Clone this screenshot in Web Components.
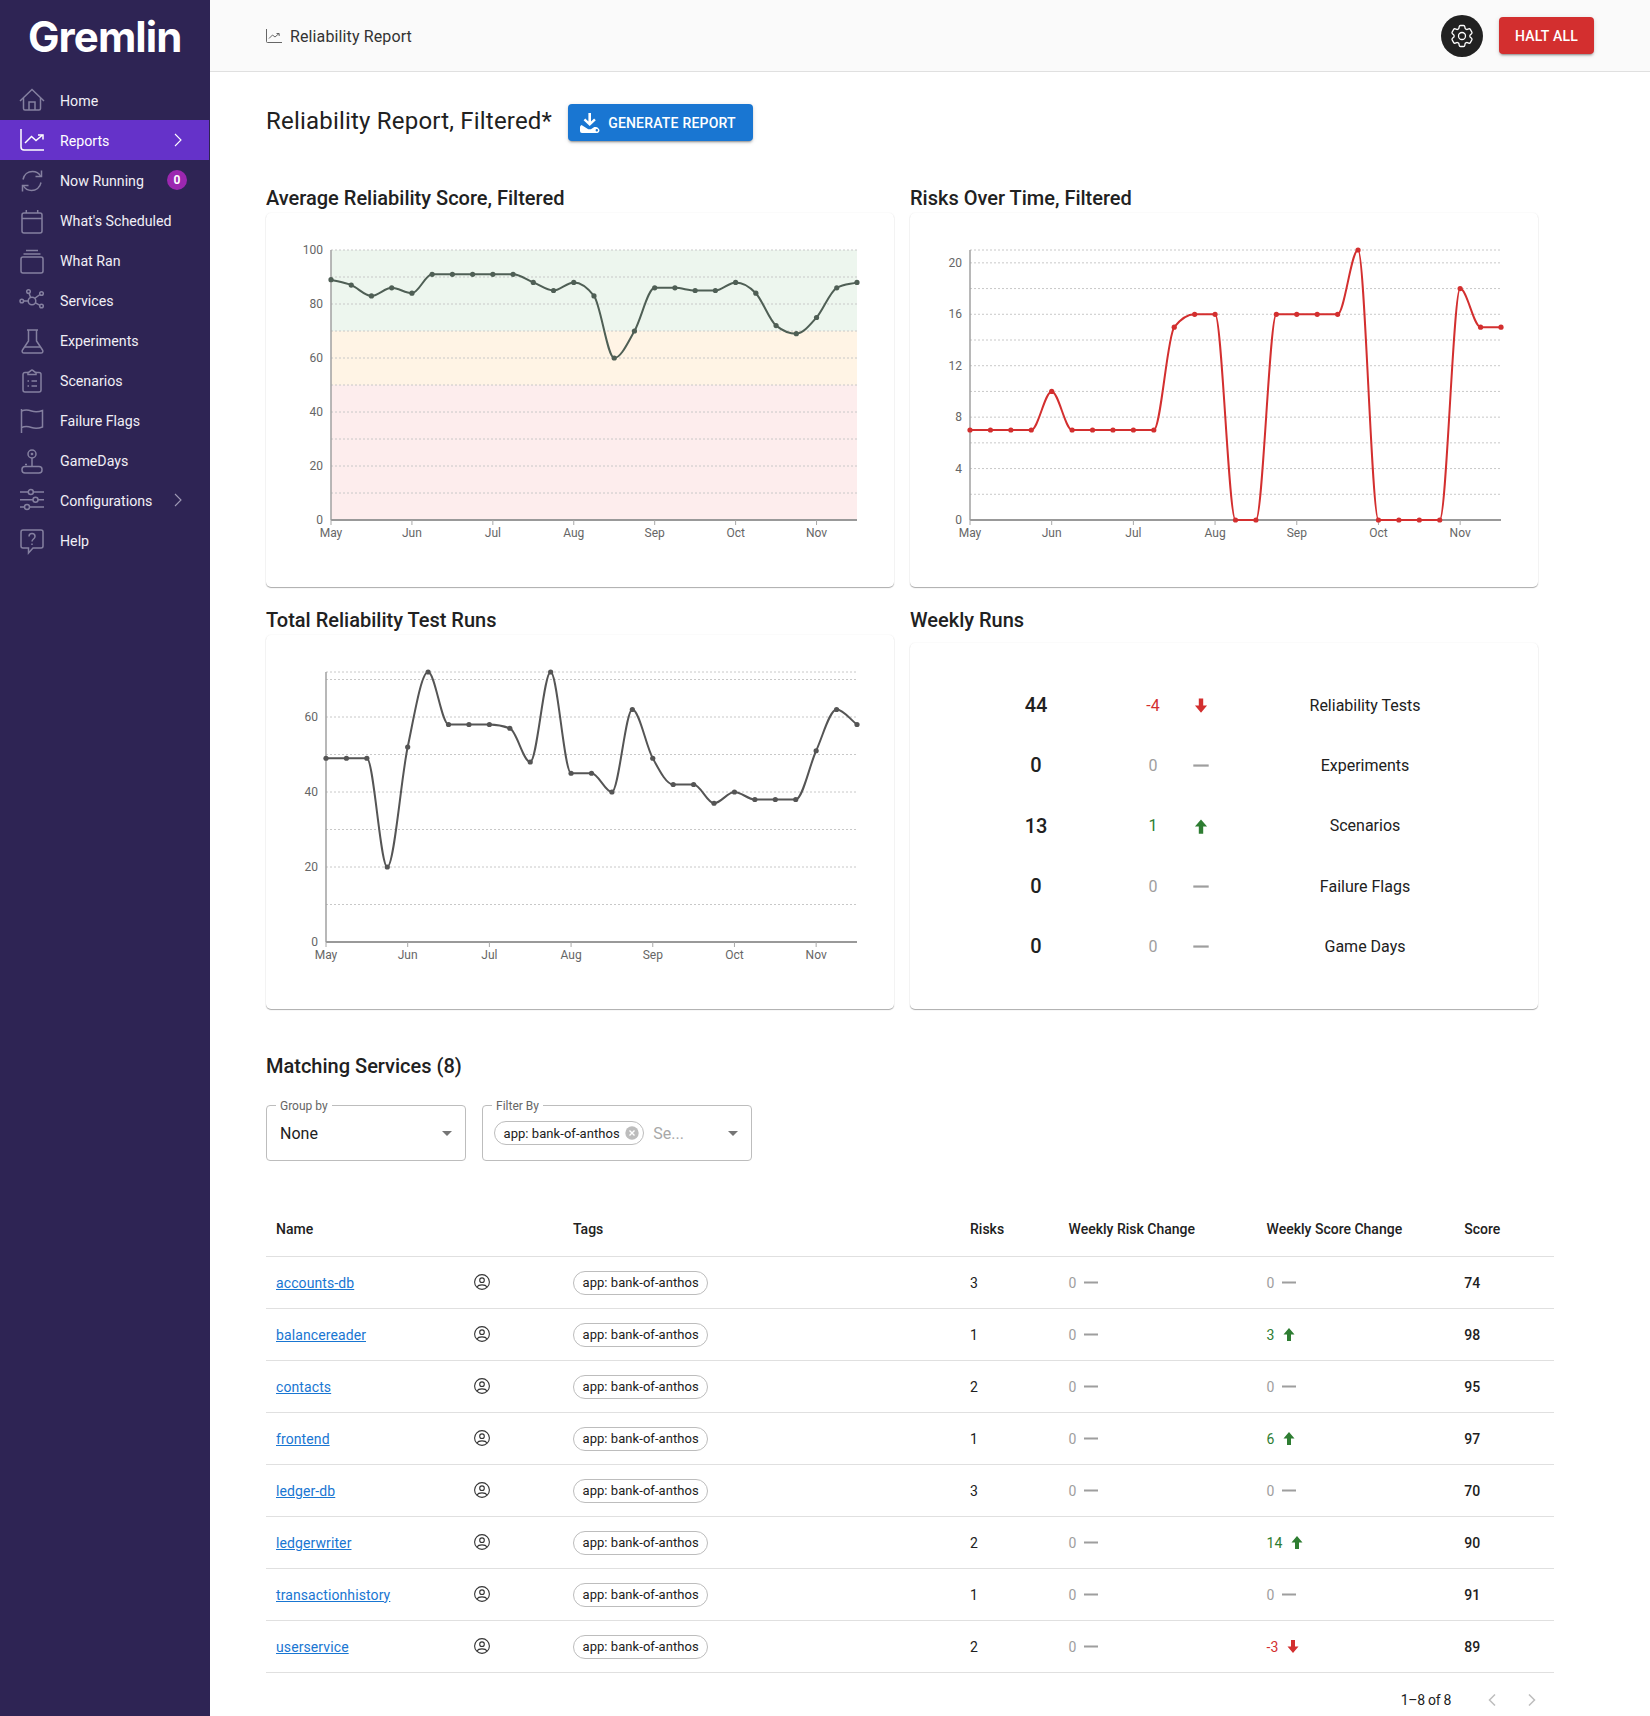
<!DOCTYPE html>
<html lang="en">
<head>
<meta charset="utf-8">
<title>Reliability Report</title>
<style>
  html, body { margin: 0; background: #fff; height: 1716px; overflow: hidden; }
  body { font-family: Roboto, "Liberation Sans", sans-serif; color: #212121; }
</style>
</head>
<body>
<app-shell>
  <side-nav slot="nav"></side-nav>
  <top-bar slot="top" title="Reliability Report"></top-bar>
  <report-title>Reliability Report, Filtered*</report-title>
  <chart-grid>
    <chart-block heading="Average Reliability Score, Filtered">
      <line-chart left="65" max="100" grid="10" labels="20" color="#4f5f55" bands="1"
        data="89,87,83,86,84,91,91,91,91,91,88,85,88,83,60,70,86,86,85,85,88,84,72,69,75,86,88"></line-chart>
    </chart-block>
    <chart-block heading="Risks Over Time, Filtered">
      <line-chart left="60" max="21" grid="2" labels="4" color="#d32f2f"
        data="7,7,7,7,10,7,7,7,7,7,15,16,16,0,0,16,16,16,16,21,0,0,0,0,18,15,15"></line-chart>
    </chart-block>
    <chart-block heading="Total Reliability Test Runs">
      <line-chart left="60" max="72" grid="10" labels="20" color="#555555"
        data="49,49,49,20,52,72,58,58,58,57,48,72,45,45,40,62,49,42,42,37,40,38,38,38,51,62,58"></line-chart>
    </chart-block>
    <chart-block heading="Weekly Runs" inset>
      <weekly-runs></weekly-runs>
    </chart-block>
  </chart-grid>
  <service-table></service-table>
</app-shell>

<script>
const ICONS = {
  home: `<path d="M0 12 12 .5 24 12"/><path d="M3.500 9v10.500a1.500 1.500 0 0 0 1.500 1.500h14a1.500 1.500 0 0 0 1.500-1.500V9"/><path d="M9 21v-8h6v8"/>`,
  reports: `<path d="M1 0v18a3 3 0 0 0 3 3h20"/><path d="M5 14l6.500-6.500 4.500 4 6.500-5.500"/><path d="M18 6h5v4.500"/>`,
  running: `<path d="M3 10.500C4 5.500 8 2.500 12.500 2.500c3.500 0 6.500 1.800 8 4.500"/><path d="M21.500 1.500V7.500H15.500"/><path d="M21 13.500c-1 5-5 8-9.500 8-3.500 0-6.500-1.800-8-4.500"/><path d="M2.500 22.500V16.500H8.500"/>`,
  scheduled: `<rect x="2" y="4" width="20" height="20" rx="2"/><path d="M2 9.500h20M6.300 1v3M17.700 1v3"/>`,
  ran: `<rect x="1" y="8" width="22" height="16" rx="2"/><path d="M3.500 5h17M6 1.500h12"/>`,
  services: `<circle cx="12" cy="12" r="3.800"/><circle cx="1.800" cy="12" r="1.800"/><circle cx="8.500" cy="2.500" r="1.800"/><circle cx="21.500" cy="4.500" r="1.800"/><circle cx="21.500" cy="17" r="1.800"/><path d="M3.600 12h4.600M9 4.300l1.500 4M20 5.500l-5.300 3.800M20 16.300l-5-2.600"/>`,
  experiments: `<path d="M7 1h11M8.500 1v11L2.500 21c-1 1.500 0 3 1.500 3h17c1.500 0 2.500-1.500 1.500-3l-6-9V1"/><path d="M5 18h15"/>`,
  scenarios: `<path d="M8 3.500H5a2 2 0 0 0-2 2V21a2 2 0 0 0 2 2h14a2 2 0 0 0 2-2V5.500a2 2 0 0 0-2-2h-3"/><path d="M8 5.500V3.500c2-.5 3-2.500 4-2.500s2 2 4 2.500v2z"/><path d="M7.500 12h1.500M11.500 12h5.500M7.500 17h1.500M11.500 17h5.500"/>`,
  flags: `<path d="M1.500 0v24"/><path d="M1.500 2c4-1.500 7-1 10 0 4 1.300 7 1 11-.5V18c-4 1.500-7 1.800-11 .5-3-1-6-1.500-10 0"/>`,
  gamedays: `<circle cx="12" cy="5" r="4"/><path d="M12 9v8.500"/><rect x="2" y="17.500" width="20" height="6.500" rx="3"/><path d="M5 15.500h2"/><circle cx="12" cy="5" r=".6"/>`,
  config: `<path d="M0 3h8.500M13 3h11M0 10.700h13M18 10.700h6M0 18h4M10 18h14"/><circle cx="10.800" cy="3" r="2.500"/><circle cx="15.500" cy="10.700" r="2.500"/><circle cx="7" cy="18" r="2.500"/>`,
  help: `<path d="M3 1h18a2 2 0 0 1 2 2v14a2 2 0 0 1-2 2H13l-4.500 5v-5H3a2 2 0 0 1-2-2V3a2 2 0 0 1 2-2z"/><path d="M9 7.500c0-2 1.500-3 3-3s3 1 3 3c0 2.500-3 2.500-3 5"/><path d="M12 14.500v1.500"/>`
};

const NAV = [
  ["home", "Home"],
  ["reports", "Reports", "active chevron"],
  ["running", "Now Running", "badge"],
  ["scheduled", "What's Scheduled"],
  ["ran", "What Ran"],
  ["services", "Services"],
  ["experiments", "Experiments"],
  ["scenarios", "Scenarios"],
  ["flags", "Failure Flags"],
  ["gamedays", "GameDays"],
  ["config", "Configurations", "chevron"],
  ["help", "Help"]
];

const SERVICES = [
  ["accounts-db", 3, 0, 0, 74],
  ["balancereader", 1, 0, 3, 98],
  ["contacts", 2, 0, 0, 95],
  ["frontend", 1, 0, 6, 97],
  ["ledger-db", 3, 0, 0, 70],
  ["ledgerwriter", 2, 0, 14, 90],
  ["transactionhistory", 1, 0, 0, 91],
  ["userservice", 2, 0, -3, 89]
];

const FONT = `Roboto, "Liberation Sans", sans-serif`;

class AppShell extends HTMLElement {
  constructor() {
    super();
    this.attachShadow({ mode: "open" });
    this.shadowRoot.innerHTML = `
      <style>
        :host { display: grid; grid-template-columns: 210px 1fr; grid-template-rows: 72px 1fr; height: 1716px; overflow: hidden; }
        ::slotted(side-nav) { grid-row: 1 / 3; }
        main { padding: 32px 96px 0 56px; min-width: 0; }
      </style>
      <slot name="nav"></slot>
      <slot name="top"></slot>
      <main><slot></slot></main>
    `;
  }
}

class SideNav extends HTMLElement {
  constructor() {
    super();
    this.attachShadow({ mode: "open" });
  }
  connectedCallback() {
    this.shadowRoot.innerHTML = `
      <style>
        :host { display: block; background: #2e2454; color: #fff; font-family: ${FONT}; }
        .logo { height: 80px; padding-left: 28px; box-sizing: border-box; font: 700 42px/73px Inter, ${FONT}; letter-spacing: -.9px; color: #fff; }
      </style>
      <div class="logo">Gremlin</div>
      ${NAV.map(([icon, label, flags = ""]) => `<nav-item icon="${icon}" ${flags.includes("active") ? "active" : ""} ${flags.includes("chevron") ? "chevron" : ""} ${flags.includes("badge") ? 'badge="0"' : ""}>${label}</nav-item>`).join("")}
    `;
  }
}

class NavItem extends HTMLElement {
  constructor() {
    super();
    this.attachShadow({ mode: "open" });
  }
  connectedCallback() {
    const icon = ICONS[this.getAttribute("icon")];
    const badge = this.getAttribute("badge");
    this.shadowRoot.innerHTML = `
      <style>
        :host { display: flex; align-items: center; height: 40px; width: 209px; padding: 2px 0 0 20px; box-sizing: border-box; font-size: 14.2px; color: #f1eff6; }
        :host([active]) { background: #6532c9; color: #fff; }
        svg.icon { width: 24px; height: 24px; fill: none; stroke: #8580a0; stroke-width: 1.500; flex: none; overflow: visible; }
        :host([active]) svg.icon { stroke: #fff; }
        .label { margin-left: 16px; flex: 1; }
        .chev { width: 8px; height: 14px; fill: none; stroke: #9f9ab5; stroke-width: 1.100; margin: -2px 27px 0 0; }
        :host([active]) .chev { stroke: #fff; }
        .badge { width: 20px; height: 20px; border-radius: 50%; background: #9c27b0; color: #fff; font-size: 12px; font-weight: 700; display: flex; align-items: center; justify-content: center; margin: -2px 22px 0 0; }
      </style>
      <svg class="icon" viewBox="0 0 24 24">${icon}</svg>
      <span class="label"><slot></slot></span>
      ${this.hasAttribute("chevron") ? `<svg class="chev" viewBox="0 0 8 14"><path d="M1 1l6 6-6 6"/></svg>` : ""}
      ${badge !== null ? `<span class="badge">${badge}</span>` : ""}
    `;
  }
}

class TopBar extends HTMLElement {
  constructor() {
    super();
    this.attachShadow({ mode: "open" });
  }
  connectedCallback() {
    this.shadowRoot.innerHTML = `
      <style>
        :host { display: flex; align-items: center; height: 72px; box-sizing: border-box; padding: 0 56px; background: #fafafa; border-bottom: 1px solid #e0e0e0; font-family: ${FONT}; }
        .crumb { display: flex; align-items: center; gap: 8px; font-size: 16px; letter-spacing: .12px; color: #333; flex: 1; padding-top: 1px; }
        .crumb svg { width: 16px; height: 14px; fill: none; stroke: #555; stroke-width: .9; }
        .gear { width: 42px; height: 42px; border-radius: 50%; background: #212121; display: flex; align-items: center; justify-content: center; }
        .gear svg { width: 28px; height: 28px; fill: none; stroke: #fff; stroke-width: 1.100; }
        button { margin-left: 16px; width: 95px; height: 37px; padding: 0; border: 0; border-radius: 4px; background: #d32f2f; color: #fff; font: 500 14px ${FONT}; letter-spacing: .2px; box-shadow: 0 3px 1px -2px rgba(0,0,0,.2), 0 2px 2px rgba(0,0,0,.14), 0 1px 5px rgba(0,0,0,.12); }
      </style>
      <div class="crumb">
        <svg viewBox="0 0 16 14"><path d="M.5 0v12.500a1 1 0 0 0 1 1H16"/><path d="M3 9.500l3.500-3.500 2.500 2 4-3.500M10.500 4.500h2.700v2.500"/></svg>
        <span>${this.getAttribute("title")}</span>
      </div>
      <div class="gear"><svg viewBox="0 0 24 24"><path d="M9.594 3.94c.09-.542.56-.94 1.11-.94h2.593c.55 0 1.02.398 1.11.94l.213 1.281c.063.374.313.686.645.87.074.04.147.083.22.127.325.196.72.257 1.075.124l1.217-.456a1.125 1.125 0 0 1 1.37.49l1.296 2.247a1.125 1.125 0 0 1-.26 1.431l-1.003.827c-.293.241-.438.613-.43.992a7.723 7.723 0 0 1 0 .255c-.008.378.137.75.43.991l1.004.827c.424.35.534.955.26 1.43l-1.298 2.247a1.125 1.125 0 0 1-1.369.491l-1.217-.456c-.355-.133-.75-.072-1.076.124a6.47 6.47 0 0 1-.22.128c-.331.183-.581.495-.644.869l-.213 1.281c-.09.543-.56.94-1.11.94h-2.594c-.55 0-1.019-.398-1.11-.94l-.213-1.281c-.062-.374-.312-.686-.644-.87a6.52 6.52 0 0 1-.22-.127c-.325-.196-.72-.257-1.076-.124l-1.217.456a1.125 1.125 0 0 1-1.369-.49l-1.297-2.247a1.125 1.125 0 0 1 .26-1.431l1.004-.827c.292-.24.437-.613.43-.991a6.932 6.932 0 0 1 0-.255c.007-.38-.138-.751-.43-.992l-1.004-.827a1.125 1.125 0 0 1-.26-1.43l1.297-2.247a1.125 1.125 0 0 1 1.37-.491l1.216.456c.356.133.751.072 1.076-.124.072-.044.146-.086.22-.128.332-.183.582-.495.644-.869l.214-1.28Z"/><circle cx="12" cy="12" r="3"/></svg></div>
      <button>HALT ALL</button>
    `;
  }
}

class ReportTitle extends HTMLElement {
  constructor() {
    super();
    this.attachShadow({ mode: "open" });
    this.shadowRoot.innerHTML = `
      <style>
        :host { display: flex; align-items: center; gap: 16px; height: 37px; margin-bottom: 45px; font-family: ${FONT}; }
        h1 { margin: 0 0 4px; font-size: 24px; font-weight: 400; letter-spacing: .2px; color: #212121; white-space: nowrap; }
        button { display: flex; align-items: center; gap: 8px; width: 185px; height: 37px; padding: 0 0 0 12px; border: 0; border-radius: 4px; background: #1976d2; color: #fff; font: 500 14px ${FONT}; letter-spacing: .2px; box-shadow: 0 3px 1px -2px rgba(0,0,0,.2), 0 2px 2px rgba(0,0,0,.14), 0 1px 5px rgba(0,0,0,.12); }
        svg { width: 20px; height: 20px; fill: #fff; flex: none; }
      </style>
      <h1><slot></slot></h1>
      <button>
        <svg viewBox="0 0 20 20"><path fill-rule="evenodd" d="M8.400 0h2.600v8.500l3.100-3 1.700 1.700L9.700 13 3.600 7.200l1.700-1.700 3.100 3zM1.500 12l6.800 4.300h2.600l3.400-2.200a4 4 0 0 1 4.200 1.300 2.600 2.600 0 0 1-1.100 4.600H2a2 2 0 0 1-2-2v-3.500c0-1.200.6-2 1.500-2.500zM16.800 16a1.200 1.200 0 1 0 0 2.400 1.200 1.200 0 0 0 0-2.400z"/></svg>
        GENERATE REPORT
      </button>
    `;
  }
}

class ChartGrid extends HTMLElement {
  constructor() {
    super();
    this.attachShadow({ mode: "open" });
    this.shadowRoot.innerHTML = `
      <style>:host { display: grid; grid-template-columns: 628px 628px; column-gap: 16px; row-gap: 21px; }</style>
      <slot></slot>
    `;
  }
}

class ChartBlock extends HTMLElement {
  constructor() {
    super();
    this.attachShadow({ mode: "open" });
  }
  connectedCallback() {
    this.shadowRoot.innerHTML = `
      <style>
        :host { display: block; font-family: ${FONT}; }
        h2 { margin: 0; height: 27px; font-size: 20px; line-height: 24px; font-weight: 500; color: #212121; white-space: nowrap; }
        .card { height: 374px; box-sizing: border-box; background: #fff; border-radius: 5px; box-shadow: 0 1px 1px rgba(0,0,0,.32), 0 0 2px rgba(0,0,0,.07); }
        :host([inset]) .card { height: 366px; margin-top: 8px; }
      </style>
      <h2>${this.getAttribute("heading")}</h2>
      <div class="card"><slot></slot></div>
    `;
  }
}

// same curve as d3 curveMonotoneX, the charts in the reference use it
function monotonePath(pts) {
  const n = pts.length;
  const dx = [], m = [], t = [];
  for (let i = 0; i < n - 1; i++) {
    dx[i] = pts[i + 1][0] - pts[i][0];
    m[i] = (pts[i + 1][1] - pts[i][1]) / dx[i];
  }
  t[0] = m[0];
  t[n - 1] = m[n - 2];
  for (let i = 1; i < n - 1; i++) {
    if (m[i - 1] * m[i] <= 0) { t[i] = 0; continue; }
    const p = (m[i - 1] + m[i]) / 2;
    t[i] = (Math.sign(m[i - 1]) + Math.sign(m[i])) * Math.min(Math.abs(m[i - 1]), Math.abs(m[i]), 0.5 * Math.abs(p));
  }
  let d = `M${pts[0][0]} ${pts[0][1]}`;
  for (let i = 0; i < n - 1; i++) {
    const h = dx[i] / 3;
    d += `C${pts[i][0] + h} ${pts[i][1] + t[i] * h} ${pts[i + 1][0] - h} ${pts[i + 1][1] - t[i + 1] * h} ${pts[i + 1][0]} ${pts[i + 1][1]}`;
  }
  return d;
}

class LineChart extends HTMLElement {
  constructor() {
    super();
    this.attachShadow({ mode: "open" });
  }
  connectedCallback() {
    const data = this.getAttribute("data").split(",").map(Number);
    const max = +this.getAttribute("max");
    const gridStep = +this.getAttribute("grid");
    const labelStep = +this.getAttribute("labels");
    const color = this.getAttribute("color");
    const left = +this.getAttribute("left");
    const right = 591, top = 37, bottom = 307;
    const xAt = (i) => left + (right - left) * i / (data.length - 1);
    const yAt = (v) => bottom - (bottom - top) * v / max;
    const pts = data.map((v, i) => [xAt(i), yAt(v)]);
    const months = ["May", "Jun", "Jul", "Aug", "Sep", "Oct", "Nov"];

    let grid = "", labels = "";
    for (let v = 0; v <= max; v += gridStep) {
      if (v > 0) grid += `<line class="grid" x1="${left}" x2="${right}" y1="${yAt(v)}" y2="${yAt(v)}"/>`;
      if (v % labelStep === 0) labels += `<text class="tick" x="${left - 8}" y="${yAt(v) + 4}" text-anchor="end">${v}</text>`;
    }
    if (max % gridStep !== 0) grid += `<line class="grid" x1="${left}" x2="${right}" y1="${top}" y2="${top}"/>`;

    const bands = this.hasAttribute("bands") ? `
      <rect x="${left}" y="${yAt(100)}" width="${right - left}" height="${yAt(70) - yAt(100)}" fill="#edf6ee"/>
      <rect x="${left}" y="${yAt(70)}" width="${right - left}" height="${yAt(50) - yAt(70)}" fill="#fff4e5"/>
      <rect x="${left}" y="${yAt(50)}" width="${right - left}" height="${yAt(0) - yAt(50)}" fill="#fdeded"/>` : "";

    const xTicks = months.map((name, i) => {
      const x = xAt(i * 4);
      return `<line class="axis" x1="${x}" x2="${x}" y1="${bottom}" y2="${bottom + 5}"/>
        <text class="tick" x="${x}" y="${bottom + 17}" text-anchor="middle">${name}</text>`;
    }).join("");

    this.shadowRoot.innerHTML = `
      <style>
        :host { display: block; height: 100%; }
        svg { display: block; width: 100%; height: 100%; }
        .grid { stroke: #c8c8c8; stroke-width: 1; stroke-dasharray: 2 2; }
        .axis { stroke: #a8a8a8; stroke-width: 1; }
        .frame { stroke: #a0a0a0; stroke-width: 1.500; }
        .base { stroke: #999; stroke-width: 2; }
        .tick { font: 12px ${FONT}; fill: #666; }
        .line { fill: none; stroke: ${color}; stroke-width: 2; }
        .dot { fill: ${color}; }
      </style>
      <svg viewBox="0 0 628 374">
        ${bands}
        ${grid}
        <line class="frame" x1="${left}" x2="${left}" y1="${top}" y2="${bottom}"/>
        <line class="base" x1="${left}" x2="${right}" y1="${bottom}" y2="${bottom}"/>
        ${xTicks}
        ${labels}
        <path class="line" d="${monotonePath(pts)}"/>
        ${pts.map(([x, y]) => `<circle class="dot" cx="${x}" cy="${y}" r="2.600"/>`).join("")}
      </svg>
    `;
  }
}

class TrendMark extends HTMLElement {
  constructor() {
    super();
    this.attachShadow({ mode: "open" });
  }
  connectedCallback() {
    const value = +this.getAttribute("value");
    const dir = value > 0 ? "up" : value < 0 ? "down" : "flat";
    const col = { up: "#2e7d32", down: "#d32f2f", flat: "#9e9e9e" }[dir];
    const mark = {
      up: `<path d="M6 0l5.500 6.500H8V13H4V6.500H.5z"/>`,
      down: `<path d="M6 13L.5 6.500H4V0h4v6.500h3.500z"/>`,
      flat: `<rect x="-1" y="5.500" width="14" height="2"/>`
    }[dir];
    this.shadowRoot.innerHTML = `
      <style>
        :host { display: inline-flex; width: 14px; height: 14px; align-items: center; justify-content: center; }
        svg { width: 12px; height: 13px; fill: ${col}; overflow: visible; }
      </style>
      <svg viewBox="0 0 12 13">${mark}</svg>
    `;
  }
}

class WeeklyRuns extends HTMLElement {
  constructor() {
    super();
    this.attachShadow({ mode: "open" });
    const rows = [[44, -4, "Reliability Tests"], [0, 0, "Experiments"], [13, 1, "Scenarios"], [0, 0, "Failure Flags"], [0, 0, "Game Days"]];
    const tone = (v) => v > 0 ? "#2e7d32" : v < 0 ? "#d32f2f" : "#9e9e9e";
    this.shadowRoot.innerHTML = `
      <style>
        :host { display: grid; grid-template-columns: 162px 72px 24px 304px; grid-auto-rows: 60.3px; padding: 32px 0 0 45px; align-items: center; justify-items: center; font-family: ${FONT}; font-size: 16px; color: #212121; }
        .num { font-size: 20px; font-weight: 500; }
        trend-mark { transform: scale(1.100); }
      </style>
      ${rows.map(([n, d, label]) => `
        <span class="num">${n}</span>
        <span style="color:${tone(d)}">${d}</span>
        <trend-mark value="${d}"></trend-mark>
        <span>${label}</span>`).join("")}
    `;
  }
}

class OutlinedField extends HTMLElement {
  constructor() {
    super();
    this.attachShadow({ mode: "open" });
  }
  connectedCallback() {
    this.shadowRoot.innerHTML = `
      <style>
        :host { display: flex; align-items: center; position: relative; height: 56px; box-sizing: border-box; border: 1px solid #bdbdbd; border-radius: 4px; padding: 0 13px; font-size: 16px; color: #212121; }
        label { position: absolute; top: -8px; left: 9px; padding: 0 4px; background: #fff; font-size: 12px; line-height: 16px; color: #666; }
        .value { flex: 1; display: flex; align-items: center; min-width: 0; }
        svg { width: 10px; height: 5px; fill: #757575; flex: none; }
      </style>
      <label>${this.getAttribute("label")}</label>
      <div class="value"><slot></slot></div>
      <svg viewBox="0 0 10 5"><path d="M0 0h10L5 5z"/></svg>
    `;
  }
}

class TagChip extends HTMLElement {
  constructor() {
    super();
    this.attachShadow({ mode: "open" });
  }
  connectedCallback() {
    this.shadowRoot.innerHTML = `
      <style>
        :host { display: inline-flex; align-items: center; height: 24px; box-sizing: border-box; padding: 0 8.5px; border: 1px solid #bdbdbd; border-radius: 12px; font-size: 13px; letter-spacing: .06px; color: #212121; white-space: nowrap; background: #fff; }
        svg { width: 16px; height: 16px; margin: 0 -5px 0 4px; flex: none; }
      </style>
      <slot></slot>
      ${this.hasAttribute("removable") ? `<svg viewBox="0 0 16 16"><circle cx="8" cy="8" r="6.700" fill="#bdbdbd"/><path d="M5.500 5.500l5 5M10.500 5.500l-5 5" stroke="#fff" stroke-width="1.400"/></svg>` : ""}
    `;
  }
}

class ServiceRow extends HTMLElement {
  constructor() {
    super();
    this.attachShadow({ mode: "open" });
  }
  connectedCallback() {
    const [risk, score] = [+this.getAttribute("risk"), +this.getAttribute("delta")];
    const tone = (v) => v > 0 ? "#2e7d32" : v < 0 ? "#d32f2f" : "#9e9e9e";
    this.shadowRoot.innerHTML = `
      <style>
        :host { display: grid; grid-template-columns: 204px 93px 397px 98.600px 198px 197.700px 99.700px; align-items: center; height: 52px; box-sizing: border-box; border-bottom: 1px solid #e0e0e0; font-size: 14px; color: #212121; }
        a { color: #1976d2; text-decoration: underline; margin-left: 10px; letter-spacing: .1px; }
        .owner { width: 16px; height: 16px; margin: -1px 0 0 4px; fill: none; stroke: #333; stroke-width: 1.100; }
        .cell { padding-left: 10px; }
        tag-chip { margin-left: 10px; justify-self: start; }
        .trend { display: flex; align-items: center; gap: 8px; padding-left: 10px; }
        b { font-weight: 500; padding-left: 10px; }
      </style>
      <a href="#">${this.getAttribute("name")}</a>
      <svg class="owner" viewBox="0 0 16 16"><circle cx="8" cy="8" r="7.400"/><circle cx="8" cy="6.200" r="2.300"/><path d="M3.300 13c1-2.800 8.400-2.800 9.400 0"/></svg>
      <tag-chip>app: bank-of-anthos</tag-chip>
      <span class="cell">${this.getAttribute("risks")}</span>
      <span class="trend" style="color:${tone(risk)}">${risk}<trend-mark value="${risk}"></trend-mark></span>
      <span class="trend" style="color:${tone(score)}">${score}<trend-mark value="${score}"></trend-mark></span>
      <b>${this.getAttribute("score")}</b>
    `;
  }
}

class ServiceTable extends HTMLElement {
  constructor() {
    super();
    this.attachShadow({ mode: "open" });
    this.shadowRoot.innerHTML = `
      <style>
        :host { display: block; width: 1288px; margin-top: 45px; font-family: ${FONT}; color: #212121; }
        h2 { margin: 0 0 27px; font-size: 20px; line-height: 24px; font-weight: 500; }
        .filters { display: flex; gap: 16px; margin-bottom: 41px; width: 486px; }
        outlined-field:first-child { width: 200px; flex: none; }
        outlined-field:last-child { width: 270px; flex: none; }
        .search { margin-left: 9px; color: #a8a8a8; }
        .chipped { margin-left: -2px; }
        .head { display: grid; grid-template-columns: 204px 93px 397px 98.600px 198px 197.700px 99.700px; align-items: center; height: 55px; box-sizing: border-box; border-bottom: 1px solid #e0e0e0; font-size: 14px; font-weight: 500; }
        .head span { padding-left: 10px; }
        .pager { display: flex; align-items: center; justify-content: flex-end; height: 54px; font-size: 14px; }
        .pager svg { width: 8px; height: 12px; fill: none; stroke: #bdbdbd; stroke-width: 1.500; }
        .pager span { margin-right: 37px; letter-spacing: -.3px; }
        .pager svg + svg { margin: 0 18px 0 32px; }
      </style>
      <h2>Matching Services (8)</h2>
      <div class="filters">
        <outlined-field label="Group by">None</outlined-field>
        <outlined-field label="Filter By"><tag-chip class="chipped" removable>app: bank-of-anthos</tag-chip><span class="search">Se...</span></outlined-field>
      </div>
      <div class="head"><span>Name</span><span></span><span>Tags</span><span>Risks</span><span>Weekly Risk Change</span><span>Weekly Score Change</span><span>Score</span></div>
      ${SERVICES.map(([name, risks, risk, delta, score]) => `<service-row name="${name}" risks="${risks}" risk="${risk}" delta="${delta}" score="${score}"></service-row>`).join("")}
      <div class="pager">
        <span>1–8 of 8</span>
        <svg viewBox="0 0 8 12"><path d="M7 .5L1.500 6 7 11.500"/></svg>
        <svg viewBox="0 0 8 12"><path d="M1 .5L6.500 6 1 11.500"/></svg>
      </div>
    `;
  }
}

customElements.define("app-shell", AppShell);
customElements.define("side-nav", SideNav);
customElements.define("nav-item", NavItem);
customElements.define("top-bar", TopBar);
customElements.define("report-title", ReportTitle);
customElements.define("chart-grid", ChartGrid);
customElements.define("chart-block", ChartBlock);
customElements.define("line-chart", LineChart);
customElements.define("trend-mark", TrendMark);
customElements.define("weekly-runs", WeeklyRuns);
customElements.define("outlined-field", OutlinedField);
customElements.define("tag-chip", TagChip);
customElements.define("service-row", ServiceRow);
customElements.define("service-table", ServiceTable);
</script>
</body>
</html>
